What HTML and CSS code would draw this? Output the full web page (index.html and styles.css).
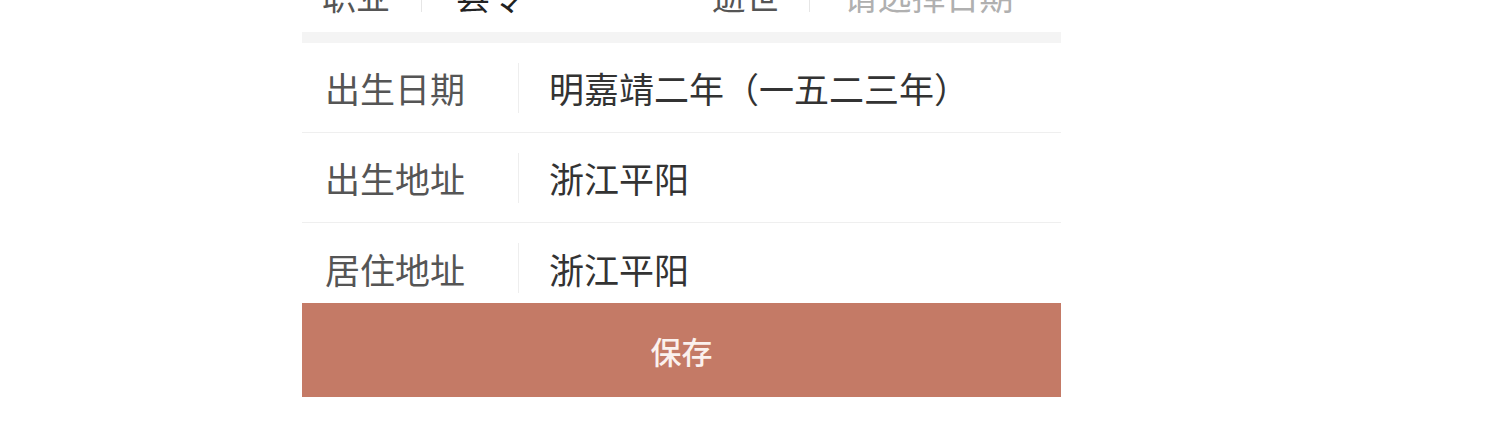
FILE: index.html
```html
<!DOCTYPE html>
<html lang="zh-CN">
<head>
<meta charset="utf-8">
<title>资料</title>
<link rel="stylesheet" href="styles.css">
</head>
<body>
<div class="page">
  <div class="form">
    <div class="row-pair">
      <div class="half half-left">
        <span class="plabel">职业</span>
        <span class="pdiv"></span>
        <span class="pvalue">县令</span>
      </div>
      <div class="half half-right">
        <span class="plabel">逝世</span>
        <span class="pdiv"></span>
        <span class="pvalue placeholder">请选择日期</span>
      </div>
    </div>
    <div class="band"></div>
    <div class="row">
      <span class="label">出生日期</span>
      <span class="divider"></span>
      <span class="value">明嘉靖二年（一五二三年）</span>
    </div>
    <div class="row">
      <span class="label">出生地址</span>
      <span class="divider"></span>
      <span class="value">浙江平阳</span>
    </div>
    <div class="row row-last">
      <span class="label">居住地址</span>
      <span class="divider"></span>
      <span class="value">浙江平阳</span>
    </div>
    <button class="save">保存</button>
  </div>
</div>
</body>
</html>
```

FILE: styles.css
```css
html, body {
  margin: 0;
  padding: 0;
  background: #ffffff;
  overflow: hidden;
}
body {
  font-family: "Noto Sans CJK SC", "Noto Sans", sans-serif;
}
.page {
  padding-left: 302px;
}
.form {
  width: 759px;
  background: #ffffff;
}
.row-pair {
  display: flex;
  height: 74px;
  margin-top: -42px;
}
.half {
  display: flex;
  align-items: center;
  width: 380px;
}
.half-left .plabel { padding-left: 20px; width: 99px; }
.half-right .plabel { padding-left: 30px; width: 97px; }
.plabel {
  font-size: 34px;
  color: #555555;
}
.pdiv {
  width: 1px;
  height: 34px;
  background: #e6e6e6;
}
.pvalue {
  padding-left: 34px;
  font-size: 34px;
  color: #222222;
}
.pvalue.placeholder {
  color: #b0b0b0;
}
.band {
  height: 11px;
  background: #f4f4f4;
}
.row {
  display: flex;
  align-items: center;
  height: 89px;
  border-bottom: 1px solid #efefef;
}
.row-last {
  height: 90px;
  border-bottom: none;
}
.label {
  width: 193px;
  padding-left: 23px;
  font-size: 35px;
  color: #555555;
}
.divider {
  width: 1px;
  height: 50px;
  background: #eeeeee;
}
.value {
  padding-left: 30px;
  font-size: 35px;
  color: #333333;
}
.save {
  display: block;
  width: 100%;
  height: 94px;
  margin-top: -10px;
  position: relative;
  border: none;
  background: #c47a66;
  color: #fbf1ee;
  font-family: "Noto Sans CJK SC", "Noto Sans", sans-serif;
  font-size: 31px;
  font-weight: 500;
  padding: 0;
}
```
